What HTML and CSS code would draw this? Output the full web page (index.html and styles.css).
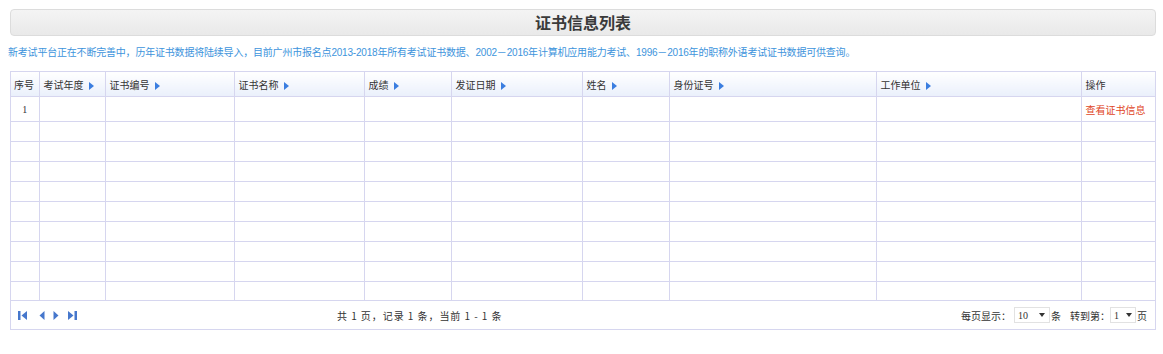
FILE: index.html
```html
<!DOCTYPE html>
<html lang="zh">
<head>
<meta charset="utf-8">
<title>证书信息列表</title>
<link rel="stylesheet" href="styles.css">
</head>
<body>
<div class="page">
  <div class="titlebar">证书信息列表</div>
  <p class="notice">新考试平台正在不断完善中，历年证书数据将陆续导入，目前广州市报名点2013-2018年所有考试证书数据、2002－2016年计算机应用能力考试、1996－2016年的职称外语考试证书数据可供查询。</p>
  <div class="grid">
    <table class="list">
      <colgroup>
        <col style="width:28px"><col style="width:66px"><col style="width:129px"><col style="width:130px"><col style="width:87px"><col style="width:131px"><col style="width:87px"><col style="width:207px"><col style="width:205px"><col style="width:74px">
      </colgroup>
      <thead>
        <tr>
          <th class="c0">序号</th>
          <th>考试年度<span class="tri"></span></th>
          <th>证书编号<span class="tri"></span></th>
          <th>证书名称<span class="tri"></span></th>
          <th>成绩<span class="tri"></span></th>
          <th>发证日期<span class="tri"></span></th>
          <th>姓名<span class="tri"></span></th>
          <th>身份证号<span class="tri"></span></th>
          <th>工作单位<span class="tri"></span></th>
          <th>操作</th>
        </tr>
      </thead>
      <tbody>
        <tr class="first"><td class="num">1</td><td></td><td></td><td></td><td></td><td></td><td></td><td></td><td></td><td><a class="op" href="#">查看证书信息</a></td></tr>
        <tr><td></td><td></td><td></td><td></td><td></td><td></td><td></td><td></td><td></td><td></td></tr>
        <tr><td></td><td></td><td></td><td></td><td></td><td></td><td></td><td></td><td></td><td></td></tr>
        <tr><td></td><td></td><td></td><td></td><td></td><td></td><td></td><td></td><td></td><td></td></tr>
        <tr><td></td><td></td><td></td><td></td><td></td><td></td><td></td><td></td><td></td><td></td></tr>
        <tr><td></td><td></td><td></td><td></td><td></td><td></td><td></td><td></td><td></td><td></td></tr>
        <tr><td></td><td></td><td></td><td></td><td></td><td></td><td></td><td></td><td></td><td></td></tr>
        <tr><td></td><td></td><td></td><td></td><td></td><td></td><td></td><td></td><td></td><td></td></tr>
        <tr><td></td><td></td><td></td><td></td><td></td><td></td><td></td><td></td><td></td><td></td></tr>
        <tr class="last"><td></td><td></td><td></td><td></td><td></td><td></td><td></td><td></td><td></td><td></td></tr>
      </tbody>
    </table>
    <div class="pager">
      <div class="nav">
        <svg class="i-first" width="10" height="9" viewBox="0 0 10 9"><rect x="0" y="0" width="2.5" height="9" fill="#4677cc"/><path d="M9 0 L3.5 4.5 L9 9 Z" fill="#4677cc"/></svg>
        <svg class="i-prev" width="6" height="9" viewBox="0 0 6 9"><path d="M5.5 0 L0.5 4.5 L5.5 9 Z" fill="#4677cc"/></svg>
        <svg class="i-next" width="6" height="9" viewBox="0 0 6 9"><path d="M0.5 0 L5.5 4.5 L0.5 9 Z" fill="#4677cc"/></svg>
        <svg class="i-last" width="11" height="9" viewBox="0 0 11 9"><path d="M1 0 L6.5 4.5 L1 9 Z" fill="#4677cc"/><rect x="7.5" y="0" width="2.5" height="9" fill="#4677cc"/></svg>
      </div>
      <div class="summary">共 1 页，记录 1 条，当前 1 - 1 条</div>
      <div class="opts">
        <span>每页显示：</span>
        <span class="sel w36"><span>10</span><span class="arr"></span></span>
        <span>条</span>
        <span class="sp">转到第：</span>
        <span class="sel w26"><span>1</span><span class="arr"></span></span>
        <span>页</span>
      </div>
    </div>
  </div>
</div>
</body>
</html>
```
FILE: styles.css
```css
html, body {
  margin: 0;
  padding: 0;
  background: #ffffff;
}
body {
  font-family: "Liberation Sans", "Noto Sans CJK SC", sans-serif;
  font-size: 12px;
  color: #333;
}
.page {
  padding: 9px 7px 0 10px;
  width: 1146px;
}
.titlebar {
  height: 25px;
  border: 1px solid #dcdcdc;
  border-radius: 4px;
  background: linear-gradient(#f4f4f4, #e9e9e9);
  text-align: center;
  font-family: "Noto Sans CJK SC", sans-serif;
  font-weight: bold;
  font-size: 16px;
  line-height: 25px;
  color: #3a3a3a;
}
.notice {
  margin: 8px 0 0 -2px;
  height: 18px;
  line-height: 18px;
  font-family: "Liberation Sans", "Noto Sans CJK SC", sans-serif;
  font-size: 10px;
  color: #3d94dc;
  white-space: nowrap;
  letter-spacing: -0.2px;
}
.grid {
  margin-top: 9px;
  border: 1px solid #d6d6ef;
  width: 1144px;
}
.list {
  border-collapse: collapse;
  table-layout: fixed;
  width: 1144px;
}
.list th, .list td {
  border: 1px solid #d6d6ef;
  padding: 0 4px;
  text-align: left;
  font-family: "Noto Sans CJK SC", sans-serif;
  font-size: 10px;
  font-weight: normal;
  white-space: nowrap;
  overflow: hidden;
}
.list th.c0 { padding-left: 3px; }
.list tr:first-child th { border-top: none; }
.list tr th:first-child, .list tr td:first-child { border-left: none; }
.list tr th:last-child, .list tr td:last-child { border-right: none; }
.list th {
  height: 24px;
  background: linear-gradient(#ffffff, #eaf0fb);
  color: #333;
}
.list td { height: 19px; }
.list tr.first td { height: 24px; }
.list tr.last td { height: 18px; }
.list td.num {
  text-align: center;
  font-family: "Liberation Serif", serif;
  font-size: 10px;
}
.tri {
  display: inline-block;
  width: 0;
  height: 0;
  margin-left: 5px;
  vertical-align: -1px;
  border-top: 4px solid transparent;
  border-bottom: 4px solid transparent;
  border-left: 5px solid #3b7ee0;
}
.op {
  color: #e0461e;
  text-decoration: none;
}
.pager {
  display: flex;
  align-items: center;
  height: 28px;
  padding: 0 8px 0 7px;
  font-family: "Noto Sans CJK SC", sans-serif;
  font-size: 10px;
}
.nav {
  display: flex;
  align-items: center;
  width: 319px;
}
.nav .i-prev { margin-left: 11px; }
.nav .i-next { margin-left: 8px; }
.nav .i-last { margin-left: 8px; }
.summary {
  flex: 1;
  letter-spacing: 0.95px;
}
.opts {
  display: flex;
  align-items: center;
}
.opts .sp { margin-left: 9px; }
.sel {
  display: inline-flex;
  align-items: center;
  justify-content: space-between;
  height: 16px;
  border: 1px solid #e2e2e2;
  margin: 0 1px 0 3px;
  padding: 0 4px 0 3px;
  font-family: "Liberation Serif", serif;
  font-size: 10px;
  box-sizing: border-box;
}
.w36 { width: 36px; }
.w26 { width: 26px; padding-right: 3px; margin-left: 0; }
.arr {
  width: 0;
  height: 0;
  border-left: 3.5px solid transparent;
  border-right: 3.5px solid transparent;
  border-top: 4px solid #333;
}
```
